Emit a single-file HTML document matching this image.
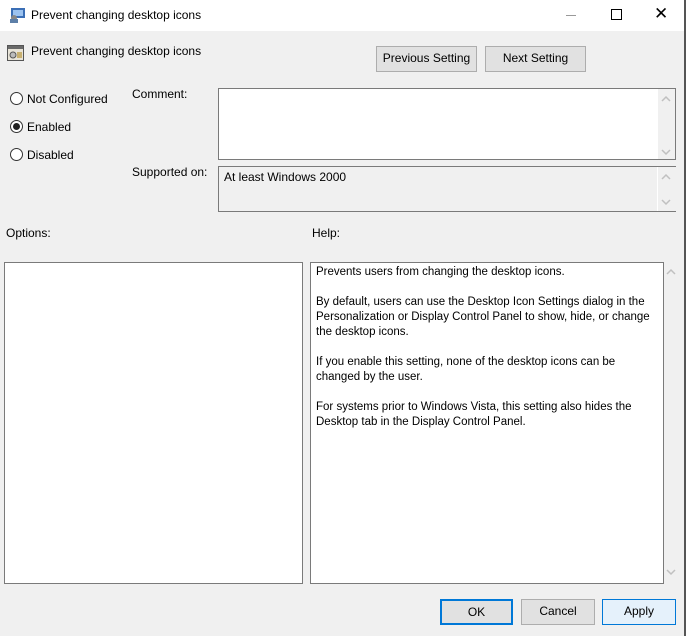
<!DOCTYPE html>
<html><head><style>
body{margin:0;width:686px;height:636px;background:#f0f0f0;font-family:"Liberation Sans",sans-serif;font-size:12px;color:#000;position:relative;overflow:hidden}
.a{position:absolute}
.box{position:absolute;border:1px solid #7a7a7a;box-sizing:border-box;background:#fff}
.btn{position:absolute;border:1px solid #adadad;background:#e1e1e1;box-sizing:border-box;text-align:center;line-height:23px;font-size:12px}
.radio{position:absolute;width:11px;height:11px;border:1px solid #333;border-radius:50%;background:#fff}
.sb{position:absolute;background:#f0f0f0}
</style></head><body>
<div class="a" style="left:0;top:0;width:686px;height:31px;background:#fff"></div>
<svg class="a" style="left:9px;top:7px" width="18" height="16"><rect x="2" y="1" width="14" height="10" fill="#3b6fb6"/><rect x="4" y="3" width="10" height="6" fill="#9cc3f0"/><circle cx="5" cy="11" r="3" fill="#888"/><rect x="1" y="12" width="8" height="4" fill="#5d7fa8"/></svg>
<div class="a" style="left:31px;top:8px">Prevent changing desktop icons</div>
<div class="a" style="left:566px;top:15px;width:10px;height:1px;background:#999"></div>
<div class="a" style="left:611px;top:9px;width:9px;height:9px;border:1px solid #000"></div>
<div class="a" style="left:654px;top:5px;font-size:17px;line-height:18px">✕</div>
<svg class="a" style="left:7px;top:45px" width="17" height="16"><rect x="0.5" y="0.5" width="16" height="15" fill="#e8e4d8" stroke="#555"/><rect x="1" y="1" width="15" height="3" fill="#6a6a6a"/><circle cx="6" cy="10" r="3" fill="#bbb" stroke="#555"/><rect x="10" y="7" width="5" height="6" fill="#c8b070"/></svg>
<div class="a" style="left:31px;top:44px">Prevent changing desktop icons</div>
<div class="btn" style="left:376px;top:46px;width:101px;height:26px">Previous Setting</div>
<div class="btn" style="left:485px;top:46px;width:101px;height:26px">Next Setting</div>
<div class="radio" style="left:10px;top:92px"></div><div class="a" style="left:27px;top:92px">Not Configured</div>
<div class="radio" style="left:10px;top:120px"></div><div class="a" style="left:13px;top:123px;width:7px;height:7px;border-radius:50%;background:#222"></div><div class="a" style="left:27px;top:120px">Enabled</div>
<div class="radio" style="left:10px;top:148px"></div><div class="a" style="left:27px;top:148px">Disabled</div>
<div class="a" style="left:132px;top:87px">Comment:</div>
<div class="box" style="left:218px;top:88px;width:458px;height:72px"></div>
<div class="sb" style="left:658px;top:89px;width:17px;height:70px"><svg width="17" height="70"><path d="M4 12l4-4 4 4M4 61l4 4 4-4" fill="none" stroke="#c0c0c0" stroke-width="1.5"/></svg></div>
<div class="a" style="left:132px;top:165px">Supported on:</div>
<div class="box" style="left:218px;top:166px;width:458px;height:46px;background:#f0f0f0"></div>
<div class="a" style="left:224px;top:170px">At least Windows 2000</div>
<div class="sb" style="left:657px;top:167px;width:18px;height:44px;border-left:1px solid #fff"><svg width="17" height="44"><path d="M4 12l4-4 4 4M4 33l4 4 4-4" fill="none" stroke="#c0c0c0" stroke-width="1.5"/></svg></div>
<div class="a" style="left:6px;top:226px">Options:</div>
<div class="a" style="left:312px;top:226px">Help:</div>
<div class="box" style="left:4px;top:262px;width:299px;height:322px"></div>
<div class="box" style="left:310px;top:262px;width:354px;height:322px;padding:2px 5px;line-height:15px;font-size:11.5px">
Prevents users from changing the desktop icons.<br><br>By default, users can use the Desktop Icon Settings dialog in the Personalization or Display Control Panel to show, hide, or change the desktop icons.<br><br>If you enable this setting, none of the desktop icons can be changed by the user.<br><br>For systems prior to Windows Vista, this setting also hides the Desktop tab in the Display Control Panel.</div>
<div class="sb" style="left:664px;top:262px;width:15px;height:322px"><svg width="15" height="322"><path d="M3 12l4-4 4 4M3 308l4 4 4-4" fill="none" stroke="#c0c0c0" stroke-width="1.5"/></svg></div>
<div class="a" style="left:684px;top:0;width:2px;height:636px;background:#555"></div>
<div class="btn" style="left:440px;top:599px;width:73px;height:26px;border:2px solid #0078d7;line-height:22px">OK</div>
<div class="btn" style="left:521px;top:599px;width:74px;height:26px">Cancel</div>
<div class="btn" style="left:602px;top:599px;width:74px;height:26px;background:#e5f1fb;border-color:#0078d7">Apply</div>
</body></html>
